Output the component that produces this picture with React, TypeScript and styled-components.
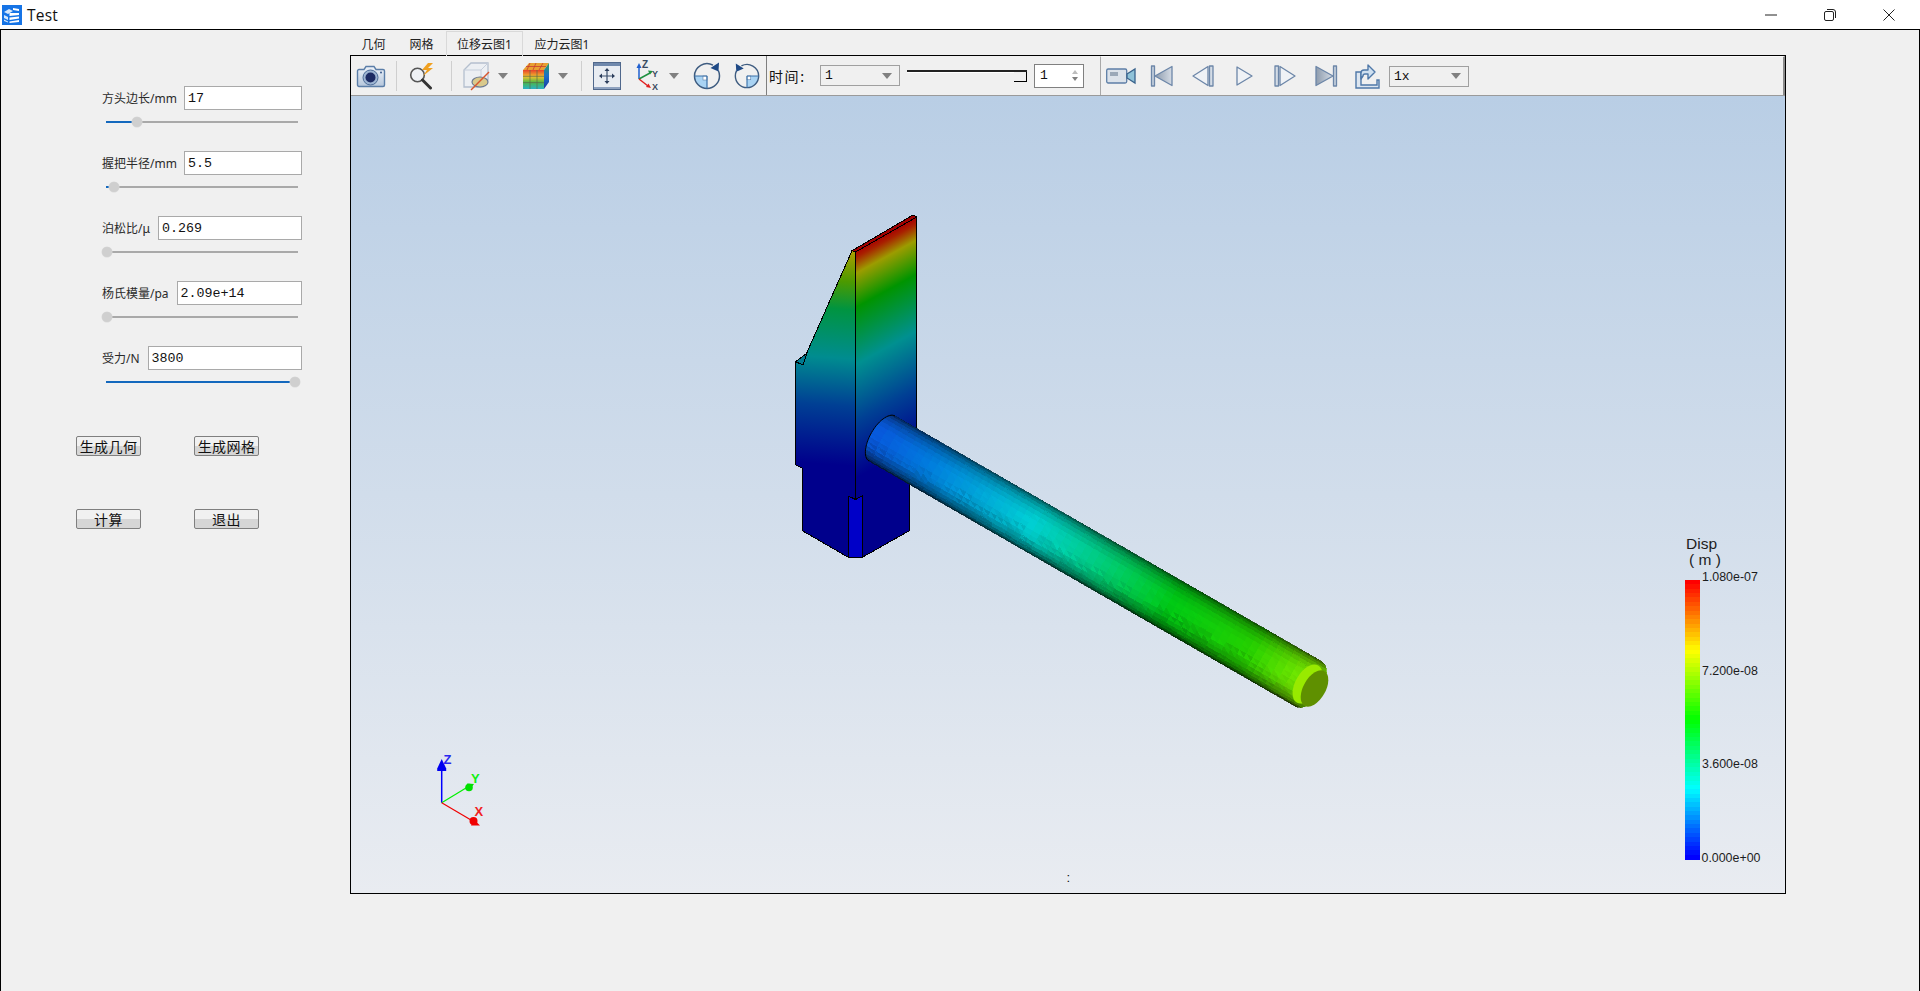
import React from "react";
import styled, { createGlobalStyle } from "styled-components";

const Global = createGlobalStyle`
  html, body { margin: 0; padding: 0; background: #f0f0f0; overflow: hidden; }
  #root { height: 991px; }
  * { box-sizing: border-box; }
`;

const UI = `"Noto Sans", "Noto Sans CJK SC", sans-serif`;
const MONO = `"Liberation Mono", "Noto Sans CJK SC", monospace`;

const Page = styled.div`
  width: 1920px; height: 991px; display: flex; flex-direction: column;
  font-family: ${UI}; color: #222; background: #f0f0f0;
`;
const TitleBar = styled.header`
  height: 29px; background: #fff; display: flex; align-items: center; padding-left: 2px; flex: none;
`;
const TitleText = styled.span`
  font: 15.5px "Open Sans", "Noto Sans", sans-serif; color: #111; margin-left: 5px; flex: 1; letter-spacing: .2px;
`;
const WinButton = styled.div`
  width: 59px; height: 29px; display: flex; align-items: center; justify-content: center;
`;
const WinButtons = styled.div`
  display: flex; margin-right: 2px;
`;
const Body = styled.div`
  flex: 1; display: flex; border: 1px solid #000; border-bottom: none; min-height: 0;
`;
const Sidebar = styled.aside`
  width: 349px; flex: none; padding-top: 56px; display: flex; flex-direction: column;
`;
const Param = styled.div`
  width: 200px; margin-left: 101px; margin-bottom: 23px; height: 42px;
`;
const ParamRow = styled.div<{ $gap: number }>`
  display: flex; align-items: center; height: 24px; gap: ${p => p.$gap}px;
`;
const ParamLabel = styled.label`
  font-size: 12px; white-space: nowrap; color: #2a2a2a;
`;
const ParamInput = styled.input`
  flex: 1; min-width: 0; height: 24px; border: 1px solid #a9a9a9; background: #fff; padding: 0 3px;
  font: 13.33px ${MONO}; color: #111; outline: none;
`;
const SliderBox = styled.div`
  position: relative; margin: 6px 0 0 4px; width: 192px; height: 12px; display: flex; align-items: center;
`;
const SliderFill = styled.div<{ $w: number }>`
  width: ${p => p.$w}px; height: 2px; background: #1368bd; flex: none;
`;
const SliderRest = styled.div`
  flex: 1; height: 2px; background: #a9a9a9;
`;
const SliderThumb = styled.div<{ $x: number }>`
  position: absolute; left: ${p => p.$x - 5}px; top: 1px; width: 10px; height: 10px; border-radius: 50%;
  background: #cfcfcf; box-shadow: 0 0 0 .5px #d8d8d8;
`;
const ButtonGrid = styled.div`
  display: grid; grid-template-columns: 65px 65px; column-gap: 53px; row-gap: 53px; margin: 25px 0 0 75px;
`;
const PushButton = styled.button`
  height: 20px; padding: 0; border: 1px solid #7f7f7f; border-radius: 2px; color: #111;
  background: linear-gradient(#f1f1f1 0 50%, #d6d6d6 50% 100%);
  font: 14px "Noto Sans CJK SC", sans-serif; line-height: 18px; letter-spacing: .4px;
`;
const Main = styled.main`
  flex: 1; display: flex; flex-direction: column; padding-top: 1px; min-width: 0;
`;
const TabBar = styled.nav`
  display: flex; height: 24px; flex: none;
`;
const Tab = styled.div<{ $w: number; $on?: boolean }>`
  width: ${p => p.$w}px; height: 25px; display: flex; align-items: center; justify-content: center;
  font-size: 12px; color: #222; position: relative; z-index: 1; padding-bottom: 1px;
  border: 1px solid ${p => (p.$on ? "#d9d9d9" : "transparent")}; border-bottom: none;
`;
const Panel = styled.section`
  width: 1436px; height: 839px; border: 1px solid #000; display: flex; flex-direction: column; flex: none;
`;
const Toolbar = styled.div`
  height: 40px; flex: none; display: flex; align-items: center; background: #f0f0f0; border-bottom: 1px solid #9a9a9a;
`;
const IconGroup = styled.div`
  width: 415px; height: 100%; display: flex; align-items: center; flex: none;
`;
const TimeGroup = styled.div`
  width: 326px; height: 100%; display: flex; align-items: center; flex: none; border-left: 1px solid #7f7f7f; padding-left: 2px;
`;
const PlayGroup = styled.div`
  flex: 1; height: 100%; margin-left: 8px; display: flex; align-items: center; border-left: 1px solid #a8a8a8;
  border-right: 2px solid #8a8a8a; border-top: 1px solid #fafafa;
`;
const Cell = styled.div<{ $w: number; $ml?: number }>`
  width: ${p => p.$w}px; margin-left: ${p => p.$ml ?? 0}px; height: 32px; flex: none;
  display: flex; align-items: center; justify-content: center;
`;
const Sep = styled.div`
  width: 1px; height: 30px; background: #cfcfcf;
`;
const Arrow = styled.div`
  width: 0; height: 0; border-left: 5px solid transparent; border-right: 5px solid transparent; border-top: 6px solid #808080;
`;
const TimeLabel = styled.span`
  font: 14px "Noto Sans CJK SC", sans-serif; color: #111; letter-spacing: 1.6px; width: 51px; white-space: nowrap;
`;
const Combo = styled.div<{ $w: number; $ml?: number }>`
  width: ${p => p.$w}px; margin-left: ${p => p.$ml ?? 0}px; height: 21px; border: 1px solid #a0a0a0; flex: none;
  display: flex; align-items: center; justify-content: space-between; padding: 0 7px 0 4px;
  font: 13px ${MONO}; color: #111;
`;
const TimeSlider = styled.div`
  width: 120px; height: 16px; margin-left: 7px; position: relative; flex: none; margin-top: 5px;
  border-top: 2px solid #222; box-shadow: inset 0 1px 0 #fff;
`;
const TimeHandle = styled.div`
  position: absolute; right: 0; top: 0; width: 13px; height: 10px;
  border-right: 1px solid #000; border-bottom: 1px solid #000; background: #f0f0f0;
`;
const Spin = styled.div`
  width: 50px; height: 24px; margin-left: 7px; border: 1px solid #808080; background: #fff; flex: none;
  display: flex; align-items: center; justify-content: space-between; padding: 0 5px;
  font: 13px ${MONO}; color: #111;
`;
const SpinArrows = styled.div`
  display: flex; flex-direction: column; gap: 3px; align-items: center;
`;
const SpinUp = styled.div`
  width: 0; height: 0; border-left: 3px solid transparent; border-right: 3px solid transparent; border-bottom: 4px solid #bdbdbd;
`;
const SpinDown = styled.div`
  width: 0; height: 0; border-left: 3px solid transparent; border-right: 3px solid transparent; border-top: 4px solid #808080;
`;
const Viewport = styled.div`
  flex: 1; min-height: 0; background: linear-gradient(#b9cee5, #e9ecf1);
`;
const SceneSvg = styled.svg`
  display: block; width: 100%; height: 100%;
`;

/* ---------- window glyphs ---------- */
const AppIcon = () => (
  <svg width="20" height="20" viewBox="0 0 20 20">
    <rect width="20" height="20" fill="#1674e6" />
    <path d="M2 7l5-3 4 2-5 3zM2 10l4 2v3l-4-2zM2 14.500l4 2v1l-4-1.500z" fill="#d6e8fc" />
    <path d="M11 3l6 1v2l-6-1zM7.500 8l9.500 0v2l-9.500 1zM7.500 12.500l9.500-1v2l-9.500 1.500zM7.500 16.500l9.500-1.500v2l-9.500 1z" fill="#fff" />
  </svg>
);
const MinIcon = () => <svg width="12" height="2"><path d="M0 1h12" stroke="#222" /></svg>;
const RestoreIcon = () => (
  <svg width="12" height="12" fill="none" stroke="#222"><rect x=".5" y="2.5" width="9" height="9" rx="1.5" /><path d="M3 .5h6a2.5 2.5 0 0 1 2.5 2.5v6" /></svg>
);
const CloseIcon = () => (
  <svg width="12" height="12" stroke="#222"><path d="M.5.5l11 11M11.5.5l-11 11" /></svg>
);

/* ---------- toolbar icons ---------- */
const Defs = () => (
  <svg width="0" height="0" style={{ position: "absolute" }}>
    <defs>
      <linearGradient id="steel" x1="0" y1="0" x2="0" y2="1">
        <stop offset="0" stopColor="#eef3f9" /><stop offset="1" stopColor="#b5c6dc" />
      </linearGradient>
      <linearGradient id="tri" x1="0" y1="0" x2="1" y2="0">
        <stop offset="0" stopColor="#8d9bad" /><stop offset="1" stopColor="#d5dce5" />
      </linearGradient>
    </defs>
  </svg>
);
const CameraIcon = () => (
  <svg width="30" height="26" viewBox="0 0 30 26">
    <path d="M3 6.500h5l2-3h8l2 3h7a1.500 1.500 0 0 1 1.500 1.500v14a1.500 1.500 0 0 1-1.500 1.500H3A1.500 1.500 0 0 1 1.500 22V8A1.500 1.500 0 0 1 3 6.500z" fill="url(#steel)" stroke="#5b7ea8" strokeWidth="1.400" />
    <circle cx="14.500" cy="14.500" r="7.500" fill="#9db4d2" stroke="#4d6c98" />
    <circle cx="14.500" cy="14.500" r="5" fill="#1c2a63" />
    <circle cx="25" cy="9.500" r="1" fill="#3c5c8c" />
  </svg>
);
const SearchIcon = () => (
  <svg width="26" height="28" viewBox="0 0 26 28">
    <circle cx="8.500" cy="13" r="6.800" fill="#eef1f5" stroke="#555" strokeWidth="1.600" />
    <path d="M13.500 18l8 8" stroke="#333" strokeWidth="3" strokeLinecap="round" />
    <path d="M19 1l-6 7h5l-4 6 10-8h-5l5-5z" fill="#f0a020" />
  </svg>
);
const ClipIcon = () => (
  <svg width="30" height="30" viewBox="0 0 30 30">
    <path d="M2 9l7-7h17v17l-7 7H2z" fill="#eceff3" stroke="#b4bfce" strokeWidth="1.300" />
    <path d="M2 9h17v17M19 9l7-7" fill="none" stroke="#c5cedb" />
    <ellipse cx="18" cy="21" rx="8" ry="5" fill="#d9c98c" stroke="#6c7a92" strokeWidth="1.200" />
    <path d="M9 29L27 11" stroke="#d8552c" strokeWidth="1.400" />
  </svg>
);
const CubeIcon = () => (
  <svg width="28" height="28" viewBox="0 0 28 28">
    <path d="M1 8l6-7h20l-5 7z" fill="#e8a030" />
    <path d="M8 1l-3 7M14 1l-3 7M21 1l-4 7M4 4.500h20" stroke="#c83c30" strokeWidth=".8" />
    <path d="M1 8h21v19H1z" fill="url(#cubeFace)" />
    <path d="M22 8l5-7v19l-5 7z" fill="url(#cubeSide)" />
    <path d="M8 8v19M15 8v19M1 14.300h21M1 20.600h21" stroke="#5a6a4a" strokeWidth=".7" />
    <defs>
      <linearGradient id="cubeFace" x1="0" y1="0" x2="0" y2="1">
        <stop offset="0" stopColor="#e8402a" /><stop offset=".35" stopColor="#f2c02c" />
        <stop offset=".65" stopColor="#4cb848" /><stop offset="1" stopColor="#28b0c8" />
      </linearGradient>
      <linearGradient id="cubeSide" x1="0" y1="0" x2="0" y2="1">
        <stop offset="0" stopColor="#2aa060" /><stop offset=".5" stopColor="#1c70c8" /><stop offset="1" stopColor="#1838a0" />
      </linearGradient>
    </defs>
  </svg>
);
const FitIcon = () => (
  <svg width="28" height="28" viewBox="0 0 28 28">
    <rect x=".5" y=".5" width="27" height="27" fill="#e8ecf2" stroke="#50688c" />
    <rect x="1" y="1" width="26" height="3" fill="#6f88ac" />
    <path d="M1 26h26" stroke="#8ea2c0" strokeWidth="2" />
    <path d="M14 8v12M8 14h12" stroke="#3a4e6c" strokeWidth="1.200" />
    <path d="M14 6l-2.500 3h5zM14 22l-2.500-3h5zM6 14l3-2.500v5zM22 14l-3-2.500v5z" fill="#2c3e5c" />
  </svg>
);
const AxisIcon = () => (
  <svg width="32" height="32" viewBox="0 0 32 32">
    <path d="M7 19V7" stroke="#2060d0" strokeWidth="1.500" />
    <path d="M7 3l-2.500 5h5z" fill="#2060d0" />
    <path d="M7 19l11-6" stroke="#209040" strokeWidth="1.500" />
    <path d="M21 11l-5-.500 2 4z" fill="#209040" />
    <path d="M7 19l9 7" stroke="#e02020" strokeWidth="1.500" />
    <path d="M19 28l-5-1 2.500-3.500z" fill="#e02020" />
    <text x="10" y="8" fontSize="10" fontWeight="700" fill="#3a4a60" fontFamily="Liberation Sans">Z</text>
    <text x="20" y="17" fontSize="9" fontWeight="700" fill="#3a4a60" fontFamily="Liberation Sans">Y</text>
    <text x="20" y="30" fontSize="9" fontWeight="700" fill="#3a4a60" fontFamily="Liberation Sans">X</text>
  </svg>
);
const RotateIcon = ({ $flip }: { $flip?: boolean }) => (
  <svg width="30" height="30" viewBox="0 0 30 30">
    <g transform={$flip ? "translate(30 0) scale(-1 1)" : undefined}>
      <path d="M15 15H2.500a12.500 12.500 0 0 0 12.500 12.500z" fill="#a9d3f3" />
      <rect x="11" y="15" width="4" height="4" fill="#fff" stroke="#5d7ea6" strokeWidth=".6" />
      <path d="M21 4.200A12.500 12.500 0 0 0 2.500 15a12.500 12.500 0 0 0 25 0 12.500 12.500 0 0 0-1.200-5.500" fill="none" stroke="#3e5c80" strokeWidth="1.500" />
      <path d="M15 15H2.500M15 15v12.500" stroke="#3a70a8" strokeWidth="1.200" />
      <path d="M27 1.500l-.500 9-8-3.500z" fill="#1f4a86" />
    </g>
  </svg>
);
const VideoIcon = () => (
  <svg width="30" height="18" viewBox="0 0 30 18">
    <rect x=".7" y="2" width="20" height="14" rx="1.500" fill="#dbe2ea" stroke="#5d7ea6" strokeWidth="1.300" />
    <rect x="4" y="5" width="8" height="4" fill="#9aa8b8" />
    <path d="M21 7l8-5v14l-8-5z" fill="#8fc2d8" stroke="#38628c" strokeWidth="1.300" />
  </svg>
);
const StepIcon = ({ $kind }: { $kind: "first" | "prev" | "play" | "next" | "last" }) => {
  const s = "#6c86a8";
  return (
    <svg width="24" height="24" viewBox="0 0 24 24" strokeWidth="1.300" stroke={s} strokeLinejoin="round">
      {$kind === "first" && <><rect x="1.500" y="2" width="3" height="20" fill="#c4cfdc" /><path d="M22 2.500v19L5 12z" fill="url(#tri)" /></>}
      {$kind === "prev" && <><rect x="18.500" y="2" width="3.500" height="20" fill="#d4dce6" /><path d="M17 2.500v19L2 12z" fill="#eff2f6" /></>}
      {$kind === "play" && <path d="M5 3v18l15-9z" fill="#eff2f6" />}
      {$kind === "next" && <><rect x="2" y="2" width="3.500" height="20" fill="#d4dce6" /><path d="M7 2.500v19L22 12z" fill="#eff2f6" /></>}
      {$kind === "last" && <><rect x="19.500" y="2" width="3" height="20" fill="#c4cfdc" /><path d="M2 2.500v19L19 12z" fill="url(#tri)" /></>}
    </svg>
  );
};
const ExportIcon = () => (
  <svg width="26" height="28" viewBox="0 0 26 28">
    <path d="M2 10h5v13h16v-5h2v8H2z" fill="#dde6f0" stroke="#4f78a8" strokeWidth="1.400" />
    <path d="M7 17v-6a3 3 0 0 1 3-3h4V3l7 7-7 7v-5h-3a2 2 0 0 0-2 2z" fill="#cfe0f0" stroke="#4f78a8" strokeWidth="1.400" strokeLinejoin="round" />
  </svg>
);

/* ---------- 3D scene ---------- */
type RGB = [number, number, number];
const STOPS: [number, RGB][] = [
  [0, [8, 88, 222]], [0.12, [0, 128, 222]], [0.35, [0, 208, 212]], [0.5, [0, 206, 132]],
  [0.68, [0, 202, 20]], [0.86, [36, 208, 0]], [1, [136, 236, 0]],
];
const ramp = (u: number): RGB => {
  for (let i = 1; i < STOPS.length; i++) {
    if (u <= STOPS[i][0]) {
      const [a, ca] = STOPS[i - 1];
      const [b, cb] = STOPS[i];
      const t = (u - a) / (b - a);
      return [0, 1, 2].map(k => ca[k] + (cb[k] - ca[k]) * t) as RGB;
    }
  }
  return STOPS[STOPS.length - 1][1];
};
const noise = (a: number, b: number) => {
  const x = Math.sin(a * 127.1 + b * 311.7) * 43758.5453;
  return x - Math.floor(x) - 0.5;
};
const A = [882, 438.5];
const B = [1308.7, 684];
const D = [0.866, 0.5];
const NV = [-0.5, 0.866];
const R = 26;
const point = (u: number, th: number) => {
  const bulge = u < 0.5 ? -12 : 14;
  const off = bulge * Math.pow(Math.abs(2 * u - 1), 14);
  const ax = A[0] + (B[0] - A[0]) * u;
  const ay = A[1] + (B[1] - A[1]) * u;
  const c = Math.cos(th) * off;
  const s = Math.sin(th) * R;
  return [ax + NV[0] * s + D[0] * c, ay + NV[1] * s + D[1] * c];
};
const buildMesh = () => {
  const out: { pts: string; fill: string }[] = [];
  const NU = 64;
  const NT = 16;
  for (let i = 0; i < NU; i++) {
    for (let j = 0; j < NT; j++) {
      const u0 = i / NU, u1 = (i + 1) / NU;
      const t0 = -Math.PI / 2 + (j / NT) * Math.PI;
      const t1 = -Math.PI / 2 + ((j + 1) / NT) * Math.PI;
      const base = ramp((u0 + u1) / 2);
      const mid = (t0 + t1) / 2;
      const light = 0.2 + 0.8 * Math.cos(mid + 0.05);
      const pa = point(u0, t0), pb = point(u1, t0), pc = point(u1, t1), pd = point(u0, t1);
      const amp = mid > 0.2 ? 0.07 : 0.012;
      [[pa, pb, pc], [pa, pc, pd]].forEach((tri, k) => {
        const f = light * (1 + amp * 2 * noise(Math.floor(i / 2) + k * 0.37, j));
        const col = base.map(v => Math.max(0, Math.min(255, Math.round(v * f))));
        const fill = `rgb(${col[0]},${col[1]},${col[2]})`;
        out.push({ pts: tri.map(p => `${p[0].toFixed(1)},${p[1].toFixed(1)}`).join(" "), fill });
      });
    }
  }
  return out;
};
const MESH = buildMesh();
const startArc = (() => {
  const pts: string[] = [];
  for (let a = -90; a <= 90; a += 6) {
    const p = point(0, (a * Math.PI) / 180);
    pts.push(`${p[0].toFixed(1)},${p[1].toFixed(1)}`);
  }
  return pts.join(" ");
})();
const BANDS = Array.from({ length: 64 }, (_, i) => {
  const h = (240 * i) / 63;
  return { y: 580 + (i * 279) / 64, fill: `hsl(${h.toFixed(1)},100%,50%)` };
});
const BarLabel = styled.text`
  font-family: "Liberation Sans", sans-serif; font-size: 12.4px; fill: #1c1c1c;
`;
const BarTitle = styled.text`
  font-family: "Liberation Sans", sans-serif; font-size: 15.5px; fill: #1c1c1c;
`;
const AxisLetter = styled.text`
  font-family: "Liberation Sans", sans-serif; font-size: 13px; font-weight: 700;
`;

const Scene = () => (
  <SceneSvg viewBox="351 96 1434 797" preserveAspectRatio="none">
    <defs>
      <linearGradient id="rightFace" gradientUnits="userSpaceOnUse" x1="855" y1="251" x2="951" y2="426">
        <stop offset="0" stopColor="#a80000" /><stop offset=".03" stopColor="#a82000" /><stop offset=".1" stopColor="#9c9c00" />
        <stop offset=".25" stopColor="#009400" /><stop offset=".5" stopColor="#009090" />
        <stop offset=".75" stopColor="#004094" /><stop offset="1" stopColor="#00008c" />
      </linearGradient>
      <linearGradient id="leftFace" gradientUnits="userSpaceOnUse" x1="852" y1="252" x2="838" y2="465">
        <stop offset="0" stopColor="#a8a000" /><stop offset=".14" stopColor="#4c9a00" />
        <stop offset=".27" stopColor="#009440" /><stop offset=".5" stopColor="#008c90" />
        <stop offset=".72" stopColor="#004094" /><stop offset="1" stopColor="#00008c" />
      </linearGradient>
    </defs>
    <g shapeRendering="crispEdges" stroke="#000" strokeWidth="1">
      <polygon fill="url(#leftFace)" points="855.500,252 852,250.700 806.700,353 803,365 795.700,361.700 795.700,465 802.300,468 802.300,530.700 848.300,557.300 855.500,557.300" />
      <polygon fill="url(#rightFace)" points="855.500,252 916.700,217 916.700,465 909.300,470 909.300,530.700 862.300,557.300 855.500,557.300" />
      <polygon fill="#a00000" points="852,250.700 913,215 916.700,217 855.500,252" />
      <polygon fill="#007a90" points="795.700,361.700 806.700,353.500 803,365" />
      <polygon fill="#0000c8" points="848.300,496 855.500,499.500 862.300,495.700 862.300,557.300 848.300,557.300" />
    </g>
    <g shapeRendering="crispEdges" strokeWidth=".7">
      {MESH.map((m, i) => <polygon key={i} points={m.pts} fill={m.fill} stroke={m.fill} />)}
    </g>
    <polyline points={startArc} fill="none" stroke="#000" strokeWidth="1" />
    <g transform="translate(1307.500 684) rotate(120)">
      <ellipse rx="21.500" ry="12" fill="#98ea00" />
    </g>
    <g transform="translate(1314.500 688.500) rotate(120)">
      <ellipse rx="20" ry="11" fill="#5f9000" />
    </g>
    <g>
      <path d="M441.700 802.700V768" stroke="#0000ff" strokeWidth="1.500" />
      <path d="M441.700 759l-4.500 9.500v2.500h9v-2.500z" fill="#0000f0" />
      <AxisLetter x="443.500" y="764" fill="#2828f0">Z</AxisLetter>
      <path d="M441.700 802.700L466 788" stroke="#00f000" strokeWidth="1.200" />
      <circle cx="469" cy="787.500" r="3.800" fill="#00e000" />
      <path d="M474 784l-7-.500 3 6z" fill="#00e000" />
      <AxisLetter x="471" y="783" fill="#10f010">Y</AxisLetter>
      <path d="M441.700 802.700L471 820" stroke="#f00000" strokeWidth="1.200" />
      <circle cx="473.500" cy="821" r="4" fill="#f00000" />
      <path d="M480 825.500l-9 0 3-6z" fill="#f00000" />
      <AxisLetter x="474.500" y="815.500" fill="#f02020">X</AxisLetter>
    </g>
    <g shapeRendering="crispEdges">
      {BANDS.map((b, i) => <rect key={i} x="1685" y={b.y} width="15" height={279 / 64 + 0.5} fill={b.fill} />)}
    </g>
    <BarTitle x="1686" y="549">Disp</BarTitle>
    <BarTitle x="1689" y="565">( m )</BarTitle>
    <BarLabel x="1702" y="581">1.080e-07</BarLabel>
    <BarLabel x="1702" y="675">7.200e-08</BarLabel>
    <BarLabel x="1702" y="768">3.600e-08</BarLabel>
    <BarLabel x="1701.500" y="862">0.000e+00</BarLabel>
    <text x="1066.500" y="882" fontSize="13" fontFamily="Liberation Sans" fill="#111">:</text>
  </SceneSvg>
);

const PARAMS = [
  { label: "方头边长/mm", value: "17", pos: 31, gap: 7 },
  { label: "握把半径/mm", value: "5.5", pos: 8, gap: 7 },
  { label: "泊松比/μ", value: "0.269", pos: 1, gap: 8 },
  { label: "杨氏模量/pa", value: "2.09e+14", pos: 1, gap: 8 },
  { label: "受力/N", value: "3800", pos: 189, gap: 8 },
];

export default function App() {
  return (
    <Page>
      <Global />
      <Defs />
      <TitleBar>
        <AppIcon />
        <TitleText>Test</TitleText>
        <WinButtons>
          <WinButton><MinIcon /></WinButton>
          <WinButton><RestoreIcon /></WinButton>
          <WinButton><CloseIcon /></WinButton>
        </WinButtons>
      </TitleBar>
      <Body>
        <Sidebar>
          {PARAMS.map(p => (
            <Param key={p.label}>
              <ParamRow $gap={p.gap}>
                <ParamLabel>{p.label}</ParamLabel>
                <ParamInput readOnly value={p.value} />
              </ParamRow>
              <SliderBox>
                <SliderFill $w={p.pos} />
                <SliderRest />
                <SliderThumb $x={p.pos} />
              </SliderBox>
            </Param>
          ))}
          <ButtonGrid>
            <PushButton>生成几何</PushButton>
            <PushButton>生成网格</PushButton>
            <PushButton>计算</PushButton>
            <PushButton>退出</PushButton>
          </ButtonGrid>
        </Sidebar>
        <Main>
          <TabBar>
            <Tab $w={47}>几何</Tab>
            <Tab $w={49}>网格</Tab>
            <Tab $w={77} $on>位移云图1</Tab>
            <Tab $w={78}>应力云图1</Tab>
          </TabBar>
          <Panel>
            <Toolbar>
              <IconGroup>
                <Cell $w={40}><CameraIcon /></Cell>
                <Cell $w={10}><Sep /></Cell>
                <Cell $w={42}><SearchIcon /></Cell>
                <Cell $w={16}><Sep /></Cell>
                <Cell $w={36}><ClipIcon /></Cell>
                <Cell $w={16}><Arrow /></Cell>
                <Cell $w={36} $ml={7}><CubeIcon /></Cell>
                <Cell $w={18}><Arrow /></Cell>
                <Cell $w={18}><Sep /></Cell>
                <Cell $w={34}><FitIcon /></Cell>
                <Cell $w={40} $ml={4}><AxisIcon /></Cell>
                <Cell $w={12}><Arrow /></Cell>
                <Cell $w={53}><RotateIcon /></Cell>
                <Cell $w={28}><RotateIcon $flip /></Cell>
              </IconGroup>
              <TimeGroup>
                <TimeLabel>时间:</TimeLabel>
                <Combo $w={80}>1<Arrow /></Combo>
                <TimeSlider><TimeHandle /></TimeSlider>
                <Spin>1<SpinArrows><SpinUp /><SpinDown /></SpinArrows></Spin>
              </TimeGroup>
              <PlayGroup>
                <Cell $w={40}><VideoIcon /></Cell>
                <Cell $w={41}><StepIcon $kind="first" /></Cell>
                <Cell $w={41}><StepIcon $kind="prev" /></Cell>
                <Cell $w={41}><StepIcon $kind="play" /></Cell>
                <Cell $w={41}><StepIcon $kind="next" /></Cell>
                <Cell $w={41}><StepIcon $kind="last" /></Cell>
                <Cell $w={41}><ExportIcon /></Cell>
                <Combo $w={80} $ml={2}>1x<Arrow /></Combo>
              </PlayGroup>
            </Toolbar>
            <Viewport><Scene /></Viewport>
          </Panel>
        </Main>
      </Body>
    </Page>
  );
}
